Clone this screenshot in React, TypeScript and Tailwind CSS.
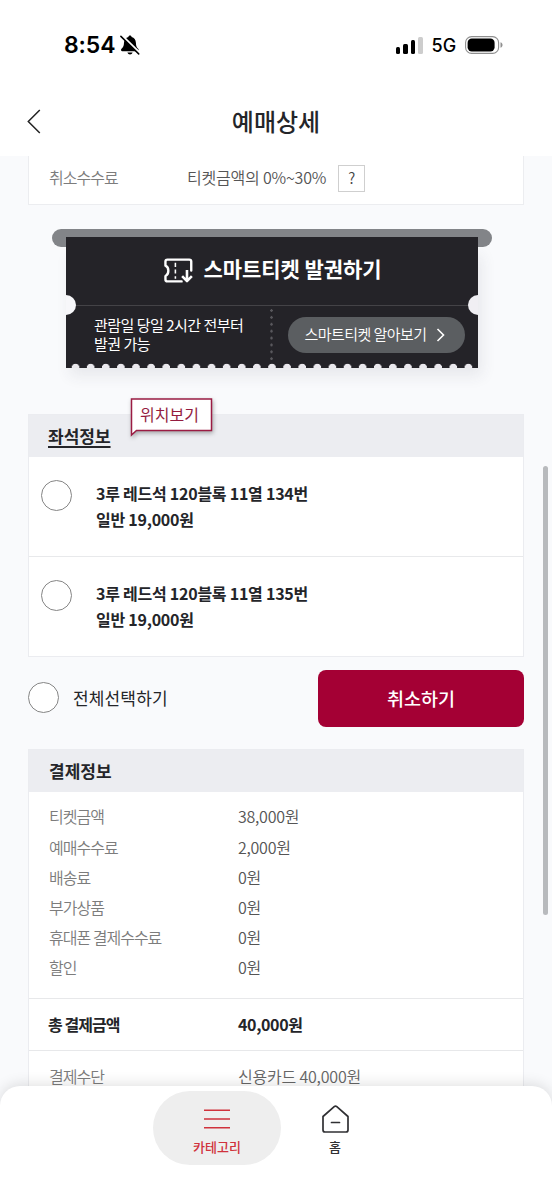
import React from "react";

const payments = [
  { label: "티켓금액", value: "38,000원" },
  { label: "예매수수료", value: "2,000원" },
  { label: "배송료", value: "0원" },
  { label: "부가상품", value: "0원" },
  { label: "휴대폰 결제수수료", value: "0원" },
  { label: "할인", value: "0원" },
];

const seats = ["3루 레드석 120블록 11열 134번", "3루 레드석 120블록 11열 135번"];

function StatusBar() {
  return (
    <div className="flex h-[90px] items-center justify-between pl-16 pr-[49px] font-['Inter',sans-serif] text-black">
      <div className="flex items-center gap-[5px]">
        <span className="text-[23px] font-semibold leading-none tracking-[-0.1px]">8:54</span>
        <svg width="20" height="20" viewBox="0 0 20 20" fill="none">
          <path d="M10 .6c.9 0 1.5.6 1.6 1.3 2.7.8 4.2 2.9 4.3 5.9.1 3.500.8 4.600 2.300 6 .9.900.5 2.400-.8 2.400H2.300c-1.300 0-1.700-1.500-.8-2.400 1.500-1.400 2.400-2.500 2.500-6 .1-3 1.700-5.100 4.400-5.900C8.500 1.200 9.100.6 10 .6Z" fill="black" />
          <path d="M7.400 17.500h5.200c-.4 1.300-1.300 2-2.600 2s-2.200-.7-2.600-2Z" fill="black" />
          <path d="M2.100.7 20 18.100" stroke="white" strokeWidth="2.200" />
          <path d="M.9 1.400 18.700 18.900" stroke="black" strokeWidth="1.500" strokeLinecap="round" />
        </svg>
      </div>
      <div className="flex items-center">
        <div className="flex h-[17px] items-end gap-[3px]">
          <i className="h-[7px] w-[4.500px] rounded-[1.500px] bg-black" />
          <i className="h-[10px] w-[4.500px] rounded-[1.500px] bg-black" />
          <i className="h-[13.500px] w-[4.500px] rounded-[1.500px] bg-black" />
          <i className="h-[17px] w-[4.500px] rounded-[1.500px] bg-[#cdcdcd]" />
        </div>
        <span className="ml-[9px] mt-px text-[18px] font-medium leading-none tracking-[-0.1px]">5G</span>
        <svg className="ml-[9px]" width="38" height="18" viewBox="0 0 38 18" fill="none">
          <rect x=".6" y=".6" width="33" height="16.800" rx="6" stroke="#8f8f8f" strokeWidth="1.100" />
          <rect x="2.600" y="2.600" width="27" height="12.800" rx="4.200" fill="black" />
          <path d="M35.500 6.200c1.600.6 2 1.700 2 2.800s-.4 2.200-2 2.800Z" fill="#8f8f8f" />
        </svg>
      </div>
    </div>
  );
}

function Ticket() {
  return (
    <section className="relative ml-[24px] mt-6 w-[440px]">
      <div className="h-[18px] rounded-full bg-[#828488]" />
      <div className="relative mx-auto -mt-[10px] h-[131px] w-[412px] overflow-hidden bg-[#242328] text-white">
        <div className="flex h-[69px] items-center justify-center border-b border-[#444347] pb-[6px] pl-[2px]">
          <svg className="mr-[10px] mt-[4px]" width="29" height="25" viewBox="0 0 28 24" fill="none" stroke="white" strokeWidth="2.300" strokeLinejoin="round">
            <path d="M17 22.500H3.300c-1.200 0-1.900-.7-1.900-1.900v-3.300c1.800-.7 2.800-2.400 2.800-5s-1-4.300-2.800-5V3.400c0-1.200.7-1.900 1.900-1.900h21.100c1.200 0 1.900.7 1.900 1.900V12" strokeLinecap="round" />
            <path d="M11 4.500v15.500" strokeWidth="1.500" strokeDasharray="4 2.500" />
            <path d="M22.200 11.500v10M17.500 17.500l4.700 4.700 4.700-4.700" strokeWidth="2.500" />
          </svg>
          <span className="text-[21px] font-bold leading-8 tracking-[-0.050px]">스마트티켓 발권하기</span>
        </div>
        <div className="flex">
          <p className="w-[206px] pl-7 pt-[9px] text-[15px] leading-[19px] tracking-[-0.500px]">
            관람일 당일 2시간 전부터
            <br />
            발권 가능
          </p>
          <div className="ml-[-2px] mt-[3px] h-[51px] w-[3px] bg-[radial-gradient(circle_at_1.500px_1.500px,#59585d_1.100px,transparent_1.500px)] bg-[length:3px_6.900px]" />
          <button className="ml-[15px] mt-[11px] flex h-9 w-[177px] items-center justify-center rounded-full bg-[#5b5e61] pb-px pr-[4px] text-[15px] font-[350] tracking-[-0.550px]">
            스마트티켓 알아보기
            <svg className="ml-[9px] mt-px" width="9" height="14" viewBox="0 0 9 14" fill="none" stroke="white" strokeWidth="1.600">
              <path d="m1.500 1 6 6-6 6" />
            </svg>
          </button>
        </div>
        <i className="absolute -left-[10px] top-[58px] size-5 rounded-full bg-[#f7f7fa]" />
        <i className="absolute -right-[10px] top-[58px] size-5 rounded-full bg-[#f0eff3]" />
        <i className="absolute bottom-0 left-[1.500px] h-[5px] w-[409px] bg-[radial-gradient(circle_at_7.550px_4.500px,#ebe9ee_3.500px,transparent_4.100px)] bg-[length:15.120px_5px]" />
      </div>
      <div className="absolute inset-x-[14px] bottom-0 top-[18px] -z-10 shadow-[4px_8px_14px_rgba(60,55,75,0.09)]" />
    </section>
  );
}

function Radio() {
  return <span className="block size-[31px] shrink-0 rounded-full border-[1.500px] border-[#858585] bg-white" />;
}

export default function App() {
  return (
    <div className="relative isolate flex h-[1200px] w-[552px] flex-col overflow-hidden bg-[#f9fafc] font-['Noto_Sans_CJK_KR',sans-serif] text-[#242529]">
      <header className="h-[156px] shrink-0 bg-white">
        <StatusBar />
        <div className="grid h-[62px] grid-cols-[60px_1fr_60px] items-center">
          <svg className="ml-[27px]" width="14" height="25" viewBox="0 0 14 25" fill="none" stroke="#222" strokeWidth="1.500">
            <path d="M12.800 1 1.300 12.500l11.500 11.500" />
          </svg>
          <h1 className="text-center text-[24px] font-medium leading-8">예매상세</h1>
        </div>
      </header>

      <main className="h-[930px] shrink-0 overflow-hidden px-7">
        <div className="flex h-[49px] items-center border border-t-0 border-[#ecedf0] bg-white pb-[7px] pl-5 text-[16px] font-[350]">
          <span className="w-[138px] tracking-[-0.950px] text-[#7c7c7c]">취소수수료</span>
          <span className="tracking-[-0.200px] text-[#555]">티켓금액의 0%~30%</span>
          <span className="ml-3 mt-1 flex size-[27px] items-center justify-center border border-[#cfcfcf] text-[15px] text-[#444]">?</span>
        </div>

        <Ticket />

        <section className="mt-[46px] h-[243px] border border-[#ebecf0] bg-white">
          <div className="relative h-[42px] bg-[#ecedf1] pl-[19px] pt-[8px]">
            <h2 className="inline-block text-[17px] font-bold leading-[26px] underline decoration-[1.500px] underline-offset-[3px]">좌석정보</h2>
            <div className="absolute left-[101px] top-[-17px] h-[38px] w-[84px]">
              <svg className="absolute inset-0 overflow-visible drop-shadow-[1px_2px_2px_rgba(0,0,0,0.3)]" width="84" height="38" viewBox="0 0 84 38">
                <path d="M1.500 1H81.500V32.500H6.500L1.500 37Z" fill="white" stroke="#9b1c43" strokeWidth="1.500" />
              </svg>
              <span className="relative block pl-[10px] pt-[3px] text-[16px] leading-[27px] text-[#941c40]">위치보기</span>
            </div>
          </div>
          {seats.map((seat) => (
            <div key={seat} className="flex h-[100px] border-b border-[#e8e9eb] pl-3 pt-[23px] last:border-0">
              <Radio />
              <p className="ml-[24px] text-[16px] font-bold leading-[26px] tracking-[-0.250px]">
                {seat}
                <br />
                일반 19,000원
              </p>
            </div>
          ))}
        </section>

        <div className="mt-[13px] flex h-[57px] items-center">
          <span className="mb-[3px]"><Radio /></span>
          <span className="ml-[14px] grow pb-px text-[17px] tracking-[0.150px]">전체선택하기</span>
          <button className="h-[57px] w-[206px] rounded-[8px] bg-[#a40034] text-[18.500px] font-medium text-white">취소하기</button>
        </div>

        <section className="mt-[22px] border border-[#ebecf0] bg-white">
          <h2 className="h-[42px] bg-[#ecedf1] pl-5 pt-[8px] text-[17px] font-bold leading-[26px]">결제정보</h2>
          <div className="h-[207px] border-b border-[#e7e8ea] pt-[9.400px]">
            {payments.map((row) => (
              <div key={row.label} className="flex h-[30.200px] items-center pl-5 text-[16px] font-[350]">
                <span className="w-[189px] tracking-[-1px] text-[#7c7c7c]">{row.label}</span>
                <span className="tracking-[-0.250px] text-[#555]">{row.value}</span>
              </div>
            ))}
          </div>
          <div className="flex h-[52px] items-center border-b border-[#e7e8ea] pb-[2px] pl-[19px] text-[16px] font-bold">
            <span className="w-[190px] tracking-[-0.950px]">총 결제금액</span>
            <span className="tracking-[-0.350px]">40,000원</span>
          </div>
          <div className="flex h-[52px] items-center pb-[3px] pl-5 text-[16px] font-[350]">
            <span className="w-[189px] tracking-[-1px] text-[#7c7c7c]">결제수단</span>
            <span className="tracking-[-0.200px] text-[#666]">신용카드 40,000원</span>
          </div>
        </section>
      </main>

      <nav className="flex h-[114px] shrink-0 rounded-t-[20px] bg-white pl-[153px] pt-[5px] shadow-[0_-2px_14px_rgba(0,0,0,0.12)]">
        <div className="flex h-[74px] w-32 flex-col items-center rounded-full bg-[#eeeeee] pt-[17px] text-[#d0323c]">
          <svg width="26" height="22" viewBox="0 0 26 22" stroke="currentColor" strokeWidth="1.600">
            <path d="M0 2.300h26M0 11h26M0 19.700h26" />
          </svg>
          <span className="mt-[7px] text-[13px] font-medium leading-[20px]">카테고리</span>
        </div>
        <div className="ml-[26px] flex w-14 flex-col items-center pt-[14px] text-[#303033]">
          <svg width="27" height="28" viewBox="0 0 27 28" fill="none" stroke="currentColor" strokeWidth="1.700" strokeLinejoin="round" strokeLinecap="round">
            <path d="M1 11.500 12.200 1.600Q13.500.5 14.800 1.600L26 11.500V25a2 2 0 0 1-2 2H3a2 2 0 0 1-2-2ZM9.500 17.500h8" />
          </svg>
          <span className="mt-[4px] text-[13px] font-medium leading-[20px]">홈</span>
        </div>
      </nav>
      <i className="absolute left-[543px] top-[466px] h-[449px] w-[5px] rounded-full bg-[#b8babd]" />
    </div>
  );
}
